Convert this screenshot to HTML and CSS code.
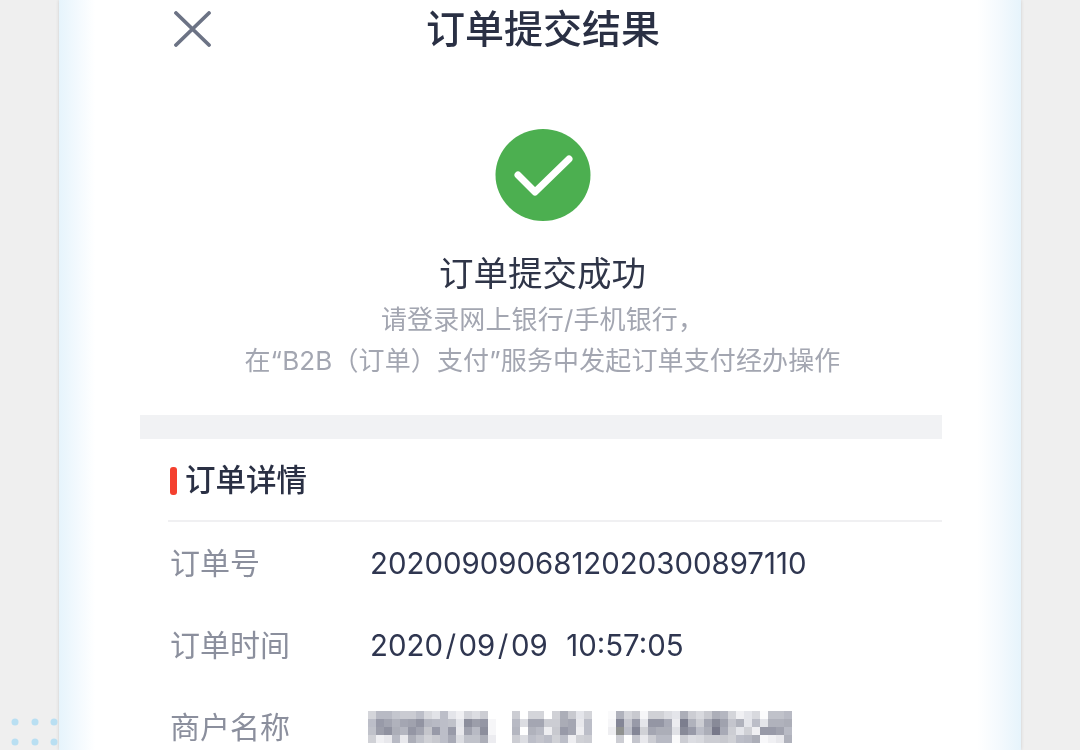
FILE: index.html
```html
<!DOCTYPE html>
<html lang="zh-CN">
<head>
<meta charset="utf-8">
<title>订单提交结果</title>
<link rel="stylesheet" href="styles.css">
</head>
<body>
<div class="page">
  <svg class="dots" width="50" height="40" viewBox="0 0 50 40" aria-hidden="true">
    <g fill="#b9dff2">
      <circle cx="5" cy="5" r="3.5"/><circle cx="25" cy="5" r="3.5"/><circle cx="44" cy="5" r="3.5"/>
      <circle cx="5" cy="25" r="3.5"/><circle cx="25" cy="25" r="3.5"/><circle cx="44" cy="25" r="3.5"/>
    </g>
  </svg>
  <main class="card">
    <div class="content">
      <header class="topbar">
        <svg class="close" width="38" height="36" viewBox="0 0 38 36" aria-hidden="true">
          <path d="M2 2 L35 34 M35 2 L2 34" fill="none" stroke="#6c7385" stroke-width="3.8" stroke-linecap="round"/>
        </svg>
        <h1 class="title">订单提交结果</h1>
      </header>
      <section class="result">
        <svg class="ok" width="96" height="92" viewBox="0 0 96 92" aria-hidden="true">
          <ellipse cx="48" cy="46" rx="47.5" ry="46" fill="#4caf50"/>
          <path d="M23 46 L40 63 L74 30" fill="none" stroke="#fff" stroke-width="7" stroke-linecap="round" stroke-linejoin="round"/>
        </svg>
        <h2 class="result-title">订单提交成功</h2>
        <p class="hint">请登录网上银行/手机银行，</p>
        <p class="hint">在“B2B（订单）支付”服务中发起订单支付经办操作</p>
      </section>
      <div class="band"></div>
      <section class="details">
        <h3 class="details-title">订单详情</h3>
        <div class="row"><span class="label">订单号</span><span class="value">2020090906812020300897110</span></div>
        <div class="row"><span class="label">订单时间</span><span class="value">2020<span class="slash">/</span>09<span class="slash">/</span>09&nbsp;&nbsp;<span class="time">10:57:05</span></span></div>
        <div class="row"><span class="label">商户名称</span>
          <svg class="mosaic" width="424" height="32" viewBox="0 0 53 4" shape-rendering="crispEdges" aria-hidden="true">
            <g id="g1">
              <rect x="0" y="0" width="1" height="1" fill="#d4d5da"/><rect x="1" y="0" width="2" height="1" fill="#b8bac4"/><rect x="3" y="0" width="1" height="1" fill="#c4c6ce"/><rect x="4" y="0" width="2" height="1" fill="#cacbd2"/><rect x="6" y="0" width="1" height="1" fill="#bcbec8"/><rect x="7" y="0" width="1" height="1" fill="#d8d9de"/><rect x="8" y="0" width="1" height="1" fill="#e2e3e8"/><rect x="9" y="0" width="1" height="1" fill="#bcbec8"/><rect x="10" y="0" width="1" height="1" fill="#e4e5ea"/><rect x="11" y="0" width="1" height="1" fill="#f0f0f3"/><rect x="12" y="0" width="1" height="1" fill="#d2d3d9"/><rect x="13" y="0" width="1" height="1" fill="#dcdde2"/><rect x="14" y="0" width="1" height="1" fill="#cccdd3"/>
              <rect x="0" y="1" width="1" height="1" fill="#bcbec8"/><rect x="1" y="1" width="1" height="1" fill="#989aa8"/><rect x="2" y="1" width="1" height="1" fill="#a2a4b0"/><rect x="3" y="1" width="1" height="1" fill="#b0b2bc"/><rect x="4" y="1" width="1" height="1" fill="#a4a6b2"/><rect x="5" y="1" width="1" height="1" fill="#a0a2ae"/><rect x="6" y="1" width="1" height="1" fill="#9294a2"/><rect x="7" y="1" width="1" height="1" fill="#b4b6c0"/><rect x="8" y="1" width="1" height="1" fill="#b8bac4"/><rect x="9" y="1" width="1" height="1" fill="#bcbec8"/><rect x="10" y="1" width="1" height="1" fill="#c0c2ca"/><rect x="11" y="1" width="1" height="1" fill="#e4e5ea"/><rect x="12" y="1" width="1" height="1" fill="#8c8e9c"/><rect x="13" y="1" width="1" height="1" fill="#9c9eaa"/><rect x="14" y="1" width="1" height="1" fill="#9496a4"/><rect x="15" y="1" width="1" height="1" fill="#f6f6f8"/>
              <rect x="0" y="2" width="1" height="1" fill="#c0c2ca"/><rect x="1" y="2" width="1" height="1" fill="#9c9eaa"/><rect x="2" y="2" width="1" height="1" fill="#9092a0"/><rect x="3" y="2" width="1" height="1" fill="#acaeb8"/><rect x="4" y="2" width="1" height="1" fill="#b4b6c0"/><rect x="5" y="2" width="1" height="1" fill="#9496a4"/><rect x="6" y="2" width="1" height="1" fill="#a2a4b0"/><rect x="7" y="2" width="1" height="1" fill="#c4c5cb"/><rect x="8" y="2" width="1" height="1" fill="#989aa8"/><rect x="9" y="2" width="1" height="1" fill="#bcbec8"/><rect x="10" y="2" width="1" height="1" fill="#989aa8"/><rect x="11" y="2" width="1" height="1" fill="#e8e8ec"/><rect x="12" y="2" width="1" height="1" fill="#a0a2ae"/><rect x="13" y="2" width="1" height="1" fill="#b8bac4"/><rect x="14" y="2" width="1" height="1" fill="#8c8e9c"/><rect x="15" y="2" width="1" height="1" fill="#f6f6f8"/>
              <rect x="0" y="3" width="1" height="1" fill="#d0d1d6"/><rect x="1" y="3" width="1" height="1" fill="#f0f0f3"/><rect x="2" y="3" width="1" height="1" fill="#e8e8ec"/><rect x="3" y="3" width="1" height="1" fill="#b8bac4"/><rect x="4" y="3" width="1" height="1" fill="#e8e8ec"/><rect x="5" y="3" width="1" height="1" fill="#acaeb8"/><rect x="6" y="3" width="1" height="1" fill="#c0c2ca"/><rect x="7" y="3" width="1" height="1" fill="#d0d1d6"/><rect x="8" y="3" width="1" height="1" fill="#c8c9cf"/><rect x="9" y="3" width="1" height="1" fill="#bcbec8"/><rect x="10" y="3" width="1" height="1" fill="#a8aab6"/><rect x="11" y="3" width="1" height="1" fill="#dcdde2"/><rect x="12" y="3" width="2" height="1" fill="#c0c2ca"/><rect x="14" y="3" width="1" height="1" fill="#acaeb8"/><rect x="15" y="3" width="1" height="1" fill="#ececf0"/>
            </g>
            <g id="g2">
              <rect x="18" y="0" width="1" height="1" fill="#cccdd3"/><rect x="20" y="0" width="2" height="1" fill="#d4d5da"/><rect x="23" y="0" width="1" height="1" fill="#d0d1d6"/><rect x="24" y="0" width="1" height="1" fill="#acaeb8"/><rect x="25" y="0" width="1" height="1" fill="#c8c9cf"/><rect x="26" y="0" width="1" height="1" fill="#e4e5ea"/><rect x="27" y="0" width="1" height="1" fill="#d4d5da"/>
              <rect x="18" y="1" width="1" height="1" fill="#b8bac4"/><rect x="19" y="1" width="1" height="1" fill="#dcdde2"/><rect x="20" y="1" width="2" height="1" fill="#a4a6b2"/><rect x="22" y="1" width="2" height="1" fill="#cccdd3"/><rect x="24" y="1" width="1" height="1" fill="#aaacb6"/><rect x="25" y="1" width="1" height="1" fill="#a4a6b2"/><rect x="26" y="1" width="1" height="1" fill="#e8e8ec"/><rect x="27" y="1" width="1" height="1" fill="#bcbec8"/>
              <rect x="18" y="2" width="1" height="1" fill="#b4b6c0"/><rect x="20" y="2" width="1" height="1" fill="#b0b2bc"/><rect x="21" y="2" width="1" height="1" fill="#b8bac4"/><rect x="22" y="2" width="1" height="1" fill="#eeeef1"/><rect x="23" y="2" width="1" height="1" fill="#c8c9cf"/><rect x="24" y="2" width="1" height="1" fill="#989aa8"/><rect x="25" y="2" width="1" height="1" fill="#a4a6b2"/><rect x="26" y="2" width="1" height="1" fill="#eeeef1"/><rect x="27" y="2" width="1" height="1" fill="#bcbec8"/>
              <rect x="18" y="3" width="1" height="1" fill="#cccdd3"/><rect x="19" y="3" width="1" height="1" fill="#dcdde2"/><rect x="20" y="3" width="1" height="1" fill="#bcbec8"/><rect x="21" y="3" width="1" height="1" fill="#c4c5cd"/><rect x="22" y="3" width="1" height="1" fill="#bcbec8"/><rect x="23" y="3" width="1" height="1" fill="#d0d1d6"/><rect x="24" y="3" width="1" height="1" fill="#bcbec8"/><rect x="25" y="3" width="1" height="1" fill="#eeeef1"/><rect x="26" y="3" width="1" height="1" fill="#d0d1d6"/><rect x="27" y="3" width="1" height="1" fill="#cccdd3"/>
            </g>
            <g id="g3">
              <rect x="30" y="0" width="1" height="1" fill="#fafafb"/><rect x="31" y="0" width="1" height="1" fill="#b0b2bc"/><rect x="32" y="0" width="1" height="1" fill="#d4d5da"/><rect x="33" y="0" width="1" height="1" fill="#c8c9cf"/><rect x="34" y="0" width="1" height="1" fill="#f6f6f8"/><rect x="35" y="0" width="2" height="1" fill="#d0d1d6"/><rect x="37" y="0" width="1" height="1" fill="#dcdde2"/><rect x="38" y="0" width="1" height="1" fill="#e4e5ea"/><rect x="39" y="0" width="1" height="1" fill="#acaeb8"/><rect x="40" y="0" width="1" height="1" fill="#cccdd3"/><rect x="41" y="0" width="1" height="1" fill="#d8d9de"/><rect x="42" y="0" width="1" height="1" fill="#c8c9cf"/><rect x="43" y="0" width="1" height="1" fill="#acaeb8"/><rect x="44" y="0" width="1" height="1" fill="#b4b6c0"/><rect x="45" y="0" width="1" height="1" fill="#d4d5da"/><rect x="46" y="0" width="1" height="1" fill="#f0f0f3"/><rect x="47" y="0" width="1" height="1" fill="#e4e5ea"/><rect x="48" y="0" width="1" height="1" fill="#d8d9de"/><rect x="49" y="0" width="1" height="1" fill="#fcfcfd"/><rect x="50" y="0" width="2" height="1" fill="#c0c2ca"/><rect x="52" y="0" width="1" height="1" fill="#b8bac4"/>
              <rect x="30" y="1" width="1" height="1" fill="#f6f6f8"/><rect x="31" y="1" width="1" height="1" fill="#848696"/><rect x="32" y="1" width="1" height="1" fill="#c4c5cd"/><rect x="33" y="1" width="1" height="1" fill="#989aa8"/><rect x="34" y="1" width="1" height="1" fill="#e4e5ea"/><rect x="35" y="1" width="2" height="1" fill="#9496a4"/><rect x="37" y="1" width="1" height="1" fill="#a8aab6"/><rect x="38" y="1" width="1" height="1" fill="#ececf0"/><rect x="39" y="1" width="1" height="1" fill="#7c7e8e"/><rect x="40" y="1" width="1" height="1" fill="#b0b2bc"/><rect x="41" y="1" width="1" height="1" fill="#cccdd3"/><rect x="42" y="1" width="1" height="1" fill="#a4a6b2"/><rect x="43" y="1" width="1" height="1" fill="#888a98"/><rect x="44" y="1" width="1" height="1" fill="#a0a2ae"/><rect x="45" y="1" width="1" height="1" fill="#c4c5cd"/><rect x="46" y="1" width="1" height="1" fill="#b0b2bc"/><rect x="47" y="1" width="1" height="1" fill="#e4e5ea"/><rect x="48" y="1" width="1" height="1" fill="#bcbec8"/><rect x="49" y="1" width="1" height="1" fill="#e4e5ea"/><rect x="50" y="1" width="2" height="1" fill="#b0b2bc"/><rect x="52" y="1" width="1" height="1" fill="#acaeb8"/>
              <rect x="30" y="2" width="1" height="1" fill="#eeeef1"/><rect x="31" y="2" width="1" height="1" fill="#909290"/><rect x="32" y="2" width="1" height="1" fill="#bcbec8"/><rect x="33" y="2" width="1" height="1" fill="#848696"/><rect x="34" y="2" width="1" height="1" fill="#d0d1d6"/><rect x="35" y="2" width="1" height="1" fill="#a4a6b2"/><rect x="36" y="2" width="2" height="1" fill="#acaeb8"/><rect x="38" y="2" width="1" height="1" fill="#e0e1e6"/><rect x="39" y="2" width="1" height="1" fill="#888a98"/><rect x="40" y="2" width="1" height="1" fill="#989aa8"/><rect x="41" y="2" width="1" height="1" fill="#bcbec8"/><rect x="42" y="2" width="1" height="1" fill="#acaeb8"/><rect x="43" y="2" width="1" height="1" fill="#78798a"/><rect x="44" y="2" width="1" height="1" fill="#a8aab6"/><rect x="45" y="2" width="1" height="1" fill="#cccdd3"/><rect x="46" y="2" width="1" height="1" fill="#e4e5ea"/><rect x="47" y="2" width="1" height="1" fill="#d0d1d6"/><rect x="48" y="2" width="1" height="1" fill="#f0f0f3"/><rect x="49" y="2" width="2" height="1" fill="#989aa8"/><rect x="51" y="2" width="1" height="1" fill="#a0a2ae"/><rect x="52" y="2" width="1" height="1" fill="#b8bac4"/>
              <rect x="31" y="3" width="1" height="1" fill="#cccdd3"/><rect x="33" y="3" width="1" height="1" fill="#c4c5cd"/><rect x="34" y="3" width="1" height="1" fill="#e8e8ec"/><rect x="35" y="3" width="1" height="1" fill="#cccdd3"/><rect x="36" y="3" width="2" height="1" fill="#b8bac4"/><rect x="38" y="3" width="1" height="1" fill="#fafafb"/><rect x="39" y="3" width="1" height="1" fill="#cccdd3"/><rect x="40" y="3" width="1" height="1" fill="#dcdde2"/><rect x="41" y="3" width="1" height="1" fill="#d8d9de"/><rect x="42" y="3" width="2" height="1" fill="#cccdd3"/><rect x="44" y="3" width="1" height="1" fill="#c8c9cf"/><rect x="45" y="3" width="1" height="1" fill="#d0d1d6"/><rect x="46" y="3" width="1" height="1" fill="#bcbec8"/><rect x="47" y="3" width="1" height="1" fill="#b8bac4"/><rect x="48" y="3" width="1" height="1" fill="#acaeb8"/><rect x="49" y="3" width="1" height="1" fill="#f8f8fa"/><rect x="50" y="3" width="1" height="1" fill="#f0f0f3"/><rect x="51" y="3" width="1" height="1" fill="#e8e8ec"/><rect x="52" y="3" width="1" height="1" fill="#b0b2bc"/>
            </g>
          </svg>
        </div>
      </section>
    </div>
  </main>
</div>
</body>
</html>
```

FILE: styles.css
```css
* { box-sizing: border-box; }

html, body {
  margin: 0;
  padding: 0;
}

body {
  width: 1080px;
  height: 750px;
  overflow: hidden;
  background: #efefef;
  font-family: "Noto Sans CJK SC", "Noto Sans", sans-serif;
}

.page {
  position: relative;
  height: 750px;
  padding: 0 59px;
}

.dots {
  position: absolute;
  left: 10px;
  top: 717px;
}

.card {
  height: 750px;
  padding: 0 79px 0 81px;
  background:
    linear-gradient(90deg, #e6f4fc 0, #f4fafe 20px, #fff 36px, #fff calc(100% - 44px), #f3f9fd calc(100% - 20px), #e6f4fc 100%);
  box-shadow: -1px 0 3px rgba(0, 0, 0, .07), 1px 0 3px rgba(0, 0, 0, .07);
}

.content {
  filter: blur(.7px);
}

.topbar {
  position: relative;
  height: 58px;
  display: flex;
  justify-content: center;
  align-items: center;
}

.close {
  position: absolute;
  left: 34px;
  top: 11px;
}

.title {
  margin: 0 0 6px 4px;
  font-size: 39px;
  line-height: 58px;
  font-weight: 500;
  color: #2a3044;
}

.result {
  padding: 71px 0 0 3px;
  display: flex;
  flex-direction: column;
  align-items: center;
}

.ok { display: block; }

.result-title {
  margin: 25px 0 3px;
  font-size: 34.5px;
  line-height: 50px;
  font-weight: 400;
  color: #2f3548;
}

.hint {
  margin: 0;
  height: 41px;
  font-family: Inter, "Noto Sans CJK SC", sans-serif;
  font-size: 26px;
  line-height: 41px;
  letter-spacing: .13px;
  color: #a3a6b1;
  white-space: nowrap;
}

.band {
  height: 24px;
  margin-top: 34px;
  background: #f1f2f4;
}

.details {
  padding-left: 28px;
}

.details-title {
  margin: 0;
  height: 83px;
  padding: 0 0 4px 17px;
  display: flex;
  align-items: center;
  position: relative;
  font-size: 30.5px;
  font-weight: 500;
  color: #2a3044;
  border-bottom: 2px solid #f0f0f2;
}

.details-title::before {
  content: "";
  position: absolute;
  left: 2px;
  top: 28px;
  width: 7px;
  height: 28px;
  border-radius: 3px;
  background: #f4402f;
}

.row {
  height: 82px;
  display: flex;
  align-items: center;
}

.label {
  width: 202px;
  padding: 0 0 4px 2px;
  font-size: 30px;
  color: #8b8f9d;
}

.value {
  font-family: Inter, "Noto Sans", sans-serif;
  font-size: 29.4px;
  color: #2f3650;
  white-space: nowrap;
}

.slash { margin: 0 2.5px; }

.time { margin-left: 2px; }

.mosaic {
  display: block;
  margin-left: -2px;
}
```
